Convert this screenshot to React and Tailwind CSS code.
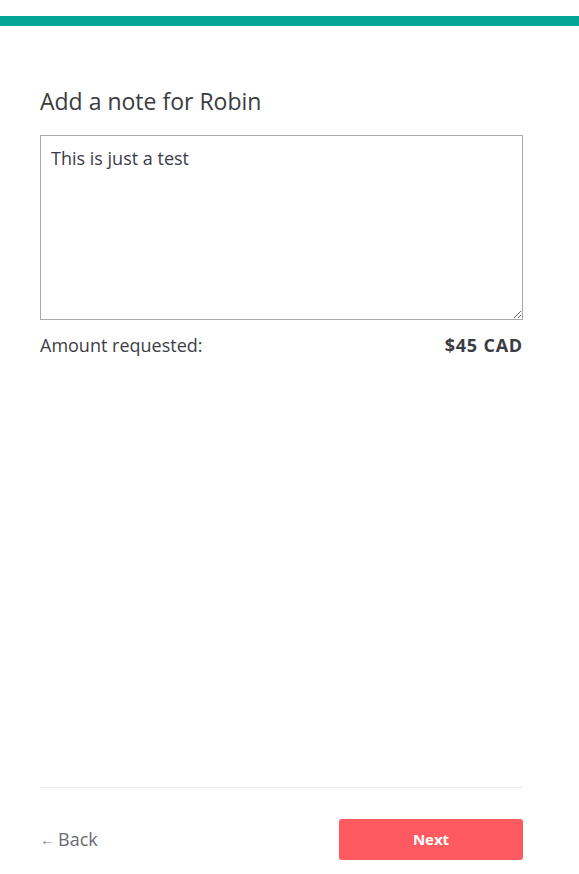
import React, { useState } from "react";

export default function App() {
  const [note, setNote] = useState("This is just a test");

  return (
    <div className="flex h-[874px] flex-col bg-white font-['Open_Sans',sans-serif] text-[#3d3d45]">
      {/* Progress bar */}
      <div className="mt-4 h-[10px] w-full bg-[#03a596]" />

      <div className="flex flex-1 flex-col pl-10 pr-14">
        <h1 className="mt-[61px] text-[23px] leading-7 text-[#3b3b42]">Add a note for Robin</h1>

        <textarea
          value={note}
          onChange={(e) => setNote(e.target.value)}
          className="mt-[20px] h-[185px] w-full resize-y border border-[#a9a9a9] px-[10px] pt-[10px] pb-[10px] text-[18px] leading-6 text-[#3b3b4a] outline-none"
        />

        <div className="mt-[13px] flex items-center justify-between text-[18px] leading-6">
          <span>Amount requested:</span>
          <span className="font-bold tracking-[0.8px] text-[#3b3b42]">$45 CAD</span>
        </div>

        <div className="flex-1" />

        {/* Footer */}
        <div className="h-px bg-[#ececec]" />
        <div className="flex h-[86px] items-start justify-between pt-[31px]">
          <button className="mt-[8px] flex items-center gap-[3px] text-[18px] leading-6 text-[#6a6a72]">
            <span className="text-[15px] text-[#8a8a8a]">←</span>
            Back
          </button>
          <button className="h-[41px] w-[184px] rounded-[3px] bg-[#ff5a5f] text-[15px] font-bold text-white">
            Next
          </button>
        </div>
      </div>
    </div>
  );
}
